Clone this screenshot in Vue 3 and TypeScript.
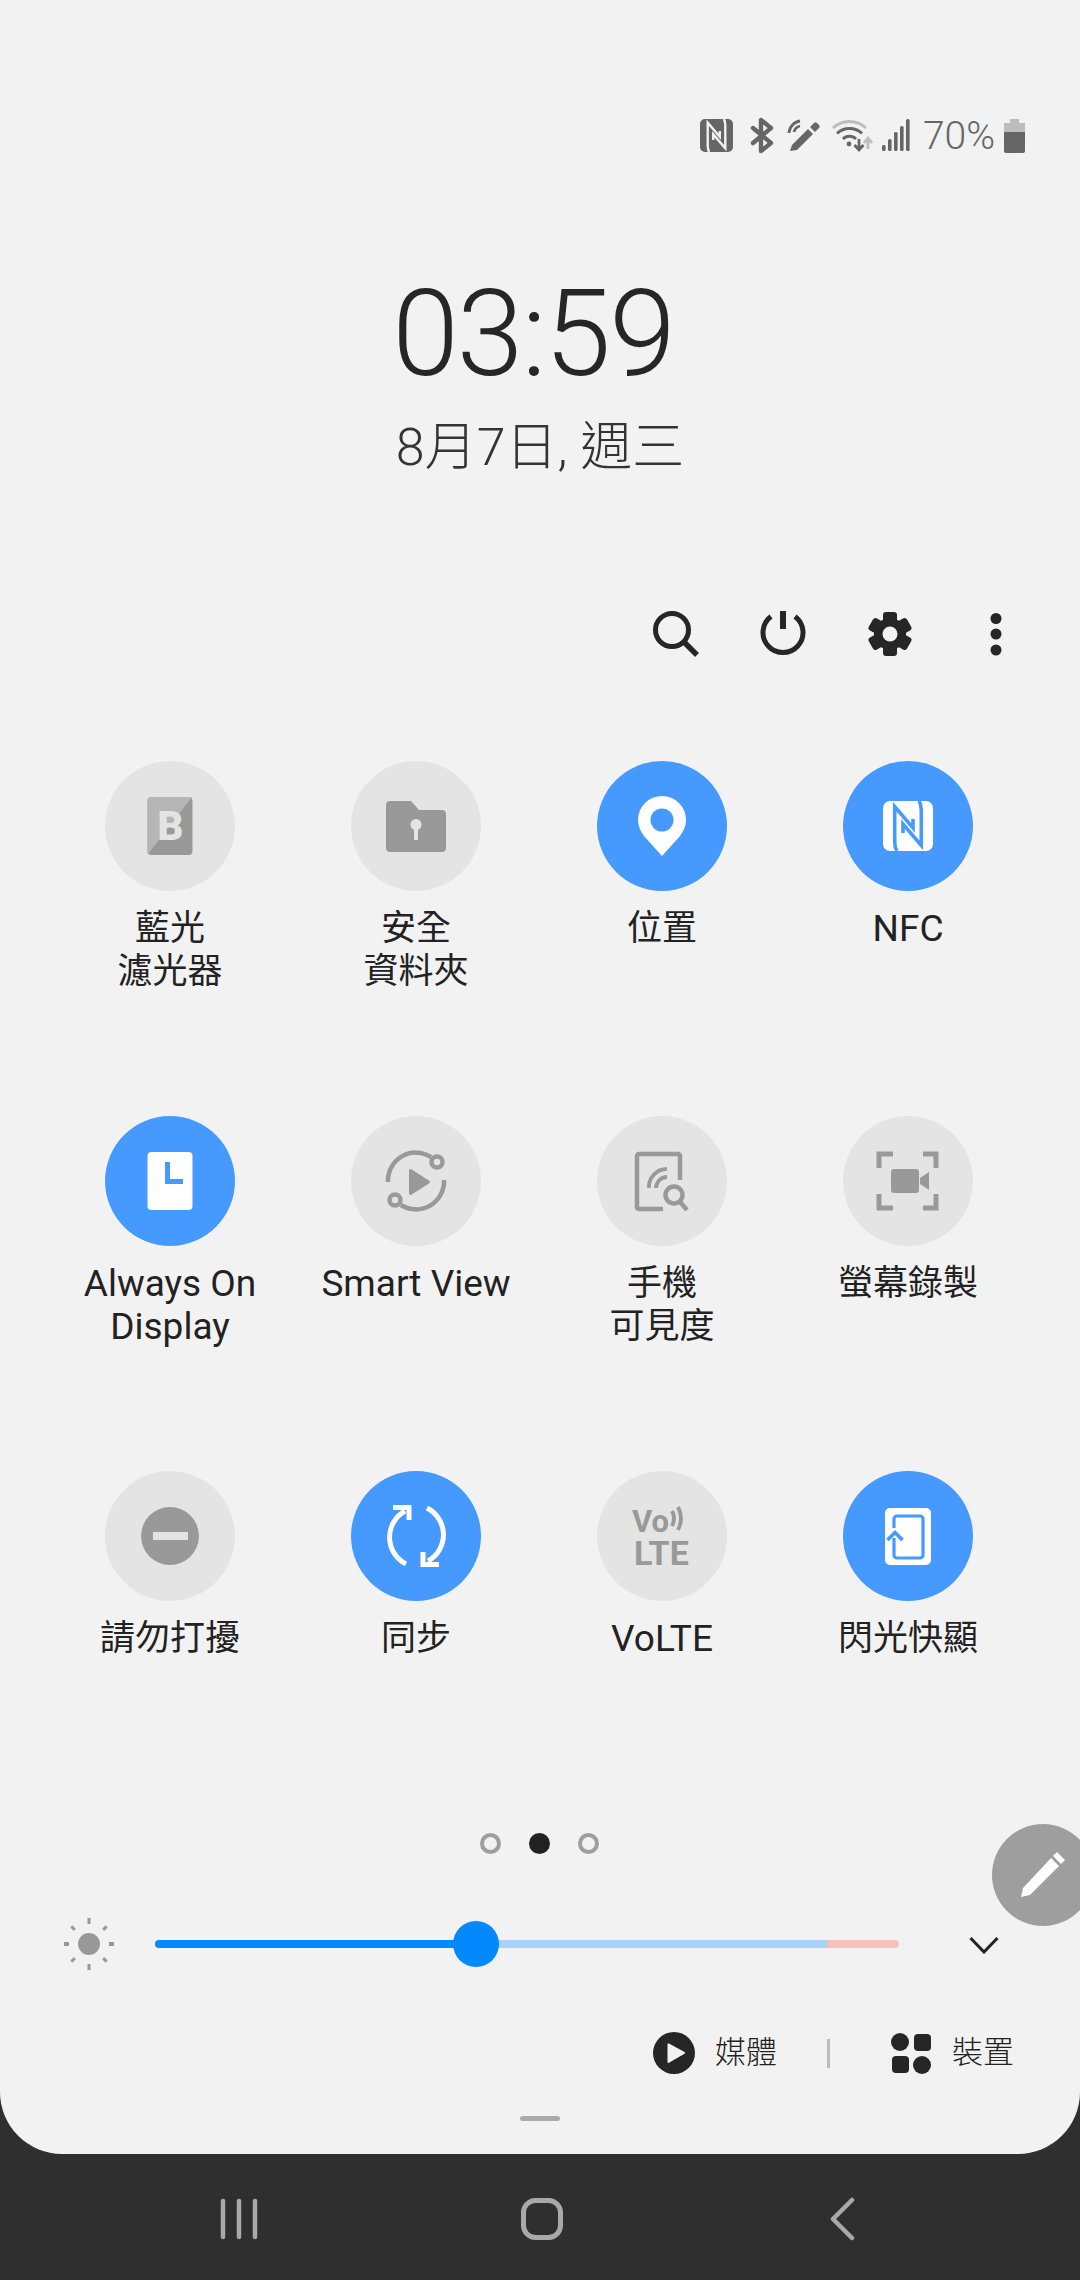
<script setup lang="ts">
const nfcGaps = 'M14 50C12 47 11.7 45 11.7 41V5.7L30 27V18M36 0C38 3 38.3 5 38.3 9V44.3L20 23V32'
</script>

<template>
  <div class="screen">
    <div class="panel">
      <div class="status">
        <svg class="status-icons" width="210" height="38" viewBox="0 0 210 38">
          <rect x="0" y="2" width="33" height="33" rx="5" fill="#666" />
          <g transform="translate(0 2) scale(.66)"><path :d="nfcGaps" fill="none" stroke="#f2f2f2" stroke-width="3.600" /></g>
          <path d="M61 3V34L71 26 53 11M61 3L71 11 53 26" fill="none" stroke="#666" stroke-width="4.400" stroke-linejoin="round" stroke-linecap="round" />
          <path d="M90 34l2-6 16-16 5 5-16 16z" fill="#666" />
          <path d="M110 10l4-4a2 2 0 0 1 3 0l2 2a2 2 0 0 1 0 3l-4 4z" fill="#666" />
          <path d="M89 16a13 13 0 0 1 11-12M94 15a8 8 0 0 1 6-6" fill="none" stroke="#666" stroke-width="2.800" />
          <path d="M133 11a24 24 0 0 1 33 0" fill="none" stroke="#bdbdbd" stroke-width="3" />
          <path d="M137 16.500a18 18 0 0 1 25 0M143 22a9 9 0 0 1 13 0" fill="none" stroke="#666" stroke-width="3" />
          <circle cx="149" cy="27" r="2.400" fill="#666" />
          <path d="M159 22v10M154.500 28l4.500 5 4.500-5" fill="none" stroke="#666" stroke-width="2.800" />
          <path d="M168 32V22M164 26l4-5 4 5" fill="none" stroke="#bdbdbd" stroke-width="2.800" />
          <g fill="#666">
            <rect x="182" y="28" width="3.600" height="6" rx="1.500" />
            <rect x="188" y="22" width="3.600" height="12" rx="1.500" />
            <rect x="194" y="15" width="3.600" height="19" rx="1.500" />
            <rect x="200" y="9" width="3.600" height="25" rx="1.500" />
            <rect x="206" y="2" width="3.600" height="32" rx="1.500" />
          </g>
        </svg>
        <span class="pct">70%</span>
        <svg class="battery" width="21" height="34" viewBox="0 0 21 34">
          <rect x="6" y="0" width="9" height="4" fill="#bdbdbd" />
          <rect x="0" y="4" width="21" height="30" rx="2" fill="#666" />
          <path d="M0 13V6a2 2 0 0 1 2-2h17a2 2 0 0 1 2 2v7z" fill="#bdbdbd" />
        </svg>
      </div>

      <div class="clock">
        <div class="time">03:59</div>
        <div class="date">8月7日, 週三</div>
      </div>

      <div class="actions">
        <svg width="60" height="60" viewBox="0 0 60 60">
          <circle cx="25" cy="26" r="16.500" fill="none" stroke="#262626" stroke-width="5" />
          <path d="M37 38l13 13" stroke="#262626" stroke-width="5.500" />
        </svg>
        <svg width="60" height="60" viewBox="0 0 60 60">
          <path d="M18 12.500a20 20 0 1 0 24 0" fill="none" stroke="#262626" stroke-width="5" />
          <path d="M30 7v18" stroke="#262626" stroke-width="6" />
        </svg>
        <svg width="60" height="60" viewBox="0 0 60 60">
          <g fill="#262626" transform="translate(30 30)">
            <circle r="16" />
            <rect x="-7" y="-22" width="14" height="12" rx="3" />
            <rect x="-7" y="-22" width="14" height="12" rx="3" transform="rotate(60)" />
            <rect x="-7" y="-22" width="14" height="12" rx="3" transform="rotate(120)" />
            <rect x="-7" y="-22" width="14" height="12" rx="3" transform="rotate(180)" />
            <rect x="-7" y="-22" width="14" height="12" rx="3" transform="rotate(240)" />
            <rect x="-7" y="-22" width="14" height="12" rx="3" transform="rotate(300)" />
            <circle r="7.500" fill="#f2f2f2" />
          </g>
        </svg>
        <svg width="60" height="60" viewBox="0 0 60 60">
          <g fill="#262626"><circle cx="30" cy="14.500" r="5.500" /><circle cx="30" cy="30" r="5.500" /><circle cx="30" cy="46" r="5.500" /></g>
        </svg>
      </div>

      <div class="grid">
        <div class="tile">
          <div class="disc">
            <svg viewBox="0 0 80 80" width="80" height="80">
              <rect x="17.500" y="11" width="45" height="58" rx="4" fill="#999" />
              <path d="M21.500 11H62L18 68q-.500-1-.500-3V15a4 4 0 0 1 4-4z" fill="#b6b6b6" />
              <text x="40.500" y="53.500" text-anchor="middle" class="glyph-b">B</text>
            </svg>
          </div>
          <div class="label">藍光<br />濾光器</div>
        </div>
        <div class="tile">
          <div class="disc">
            <svg viewBox="0 0 80 80" width="80" height="80">
              <path d="M14 15h21l8 9h23a4 4 0 0 1 4 4v34a4 4 0 0 1-4 4H14a4 4 0 0 1-4-4V19a4 4 0 0 1 4-4z" fill="#999" />
              <circle cx="40" cy="38.500" r="5.500" fill="#e4e4e4" />
              <rect x="38" y="40" width="4" height="14" fill="#e4e4e4" />
            </svg>
          </div>
          <div class="label">安全<br />資料夾</div>
        </div>
        <div class="tile">
          <div class="disc on">
            <svg viewBox="0 0 80 80" width="80" height="80">
              <path fill="#fff" fill-rule="evenodd" d="M40 10a24 24 0 0 0-24 24c0 6 2.500 11 6 16L40 70l18-20c3.500-5 6-10 6-16a24 24 0 0 0-24-24zm0 12.500a11.500 11.500 0 1 1 0 23 11.500 11.500 0 0 1 0-23z" />
            </svg>
          </div>
          <div class="label">位置</div>
        </div>
        <div class="tile">
          <div class="disc on">
            <svg viewBox="0 0 80 80" width="80" height="80">
              <rect x="15" y="15" width="50" height="50" rx="7" fill="#fff" />
              <g transform="translate(15 15)"><path :d="nfcGaps" fill="none" stroke="#4599ff" stroke-width="3.600" /></g>
            </svg>
          </div>
          <div class="label latin">NFC</div>
        </div>

        <div class="tile">
          <div class="disc on">
            <svg viewBox="0 0 80 80" width="80" height="80">
              <rect x="17.500" y="11" width="45" height="58" rx="4" fill="#fff" />
              <path d="M37.500 21V40.500H53" fill="none" stroke="#4599ff" stroke-width="5" />
            </svg>
          </div>
          <div class="label latin">Always On<br />Display</div>
        </div>
        <div class="tile">
          <div class="disc">
            <svg viewBox="0 0 80 80" width="80" height="80">
              <g fill="none" stroke="#999" stroke-width="4.500">
                <path d="M12 41A28 28 0 0 1 55 16" />
                <path d="M68 39A28 28 0 0 1 25 64" />
                <circle cx="61" cy="21" r="5.500" />
                <circle cx="19" cy="59" r="5.500" />
              </g>
              <path d="M34.500 29.500L52.500 41 34.500 52.500z" fill="#999" stroke="#999" stroke-width="3" stroke-linejoin="round" />
            </svg>
          </div>
          <div class="label latin">Smart View</div>
        </div>
        <div class="tile">
          <div class="disc">
            <svg viewBox="0 0 80 80" width="80" height="80">
              <g fill="none" stroke="#999" stroke-width="4.500">
                <path d="M58 39V15a2 2 0 0 0-2-2H17a2 2 0 0 0-2 2v51a2 2 0 0 0 2 2h24" />
                <path d="M27 47a18 18 0 0 1 18-19" stroke-width="3.800" />
                <path d="M34 47a11 11 0 0 1 11-11" stroke-width="3.800" />
                <circle cx="52" cy="54" r="8.500" />
                <path d="M58 61l7 8" />
              </g>
            </svg>
          </div>
          <div class="label">手機<br />可見度</div>
        </div>
        <div class="tile">
          <div class="disc">
            <svg viewBox="0 0 80 80" width="80" height="80">
              <path d="M11 27V13H25M55 13H68V27M68 53V67H55M25 67H11V53" fill="none" stroke="#999" stroke-width="5" />
              <rect x="23" y="28" width="28" height="24" rx="3" fill="#999" />
              <path d="M52 37l9-6v18l-9-6z" fill="#999" />
            </svg>
          </div>
          <div class="label">螢幕錄製</div>
        </div>

        <div class="tile">
          <div class="disc">
            <svg viewBox="0 0 80 80" width="80" height="80">
              <circle cx="40" cy="40" r="29" fill="#999" />
              <rect x="23" y="36" width="35" height="8" fill="#e4e4e4" />
            </svg>
          </div>
          <div class="label">請勿打擾</div>
        </div>
        <div class="tile">
          <div class="disc on">
            <svg viewBox="0 0 80 80" width="80" height="80">
              <g fill="none" stroke="#fff" stroke-width="5">
                <path d="M29 15A30 30 0 0 0 30 68" />
                <path d="M51 12A30 30 0 0 1 52 65" />
                <path d="M17 11.500H33V24" />
                <path d="M63 68.500H47V56" />
              </g>
            </svg>
          </div>
          <div class="label">同步</div>
        </div>
        <div class="tile">
          <div class="disc">
            <svg viewBox="0 0 80 80" width="80" height="80">
              <text x="10" y="36" class="glyph-vo">Vo</text>
              <path d="M50 15q4 7 0 15M56 11q6 11 0 23" fill="none" stroke="#999" stroke-width="3.800" />
              <text x="12" y="69" class="glyph-lte">LTE</text>
            </svg>
          </div>
          <div class="label latin">VoLTE</div>
        </div>
        <div class="tile">
          <div class="disc on">
            <svg viewBox="0 0 80 80" width="80" height="80">
              <rect x="17" y="12" width="46" height="57" rx="5" fill="#fff" />
              <path d="M26 42V59a3 3 0 0 0 3 3H52a3 3 0 0 0 3-3V23a3 3 0 0 0-3-3H29a3 3 0 0 0-3 3V32" fill="none" stroke="#4599ff" stroke-width="3.200" />
              <path d="M19.500 44L27 36.500 34.500 44" fill="none" stroke="#4599ff" stroke-width="3.600" />
            </svg>
          </div>
          <div class="label">閃光快顯</div>
        </div>
      </div>

      <div class="pager">
        <span class="dot"></span>
        <span class="dot current"></span>
        <span class="dot"></span>
      </div>

      <div class="brightness">
        <svg class="sun" width="56" height="56" viewBox="0 0 56 56">
          <circle cx="28" cy="28" r="11" fill="#999" />
          <g fill="#999" transform="translate(28 28)">
            <rect x="-1.500" y="-26" width="3" height="6" />
            <rect x="-1.500" y="20" width="3" height="6" />
            <rect x="-25" y="-2" width="5" height="4" />
            <rect x="20" y="-2" width="5" height="4" />
            <rect x="-1.500" y="-22" width="3" height="5" transform="rotate(45) translate(0 -3)" />
            <rect x="-1.500" y="-22" width="3" height="5" transform="rotate(135) translate(0 -3)" />
            <rect x="-1.500" y="-22" width="3" height="5" transform="rotate(225) translate(0 -3)" />
            <rect x="-1.500" y="-22" width="3" height="5" transform="rotate(315) translate(0 -3)" />
          </g>
        </svg>
        <div class="track">
          <div class="fill"></div>
          <div class="thumb"></div>
          <div class="rest"></div>
          <div class="over"></div>
        </div>
        <svg class="chevron" width="30" height="18" viewBox="0 0 30 18">
          <path d="M1.500 2L15 16 28.500 2" fill="none" stroke="#222" stroke-width="3" />
        </svg>
      </div>

      <div class="media">
        <svg width="42" height="42" viewBox="0 0 42 42">
          <circle cx="21" cy="21" r="21" fill="#262626" />
          <path d="M15.500 12.500L31 21 15.500 30z" fill="#f2f2f2" stroke="#f2f2f2" stroke-width="2" stroke-linejoin="round" />
        </svg>
        <span class="media-text">媒體</span>
        <span class="sep"></span>
        <svg class="devices" width="42" height="42" viewBox="0 0 42 42">
          <circle cx="10" cy="10" r="9" fill="#262626" />
          <rect x="24" y="2" width="17" height="17" rx="4" fill="#262626" />
          <rect x="2" y="24" width="17" height="17" rx="4" fill="#262626" />
          <circle cx="32" cy="33" r="9" fill="#262626" />
        </svg>
        <span class="media-text">裝置</span>
      </div>

      <div class="handle"></div>

      <div class="fab">
        <svg width="60" height="60" viewBox="0 0 60 60">
          <path d="M8 52l2-9L38 13l8 8-29 29z" fill="#fff" />
          <path d="M40 11l4-4 8 8-4 4z" fill="#fff" />
        </svg>
      </div>
    </div>

    <div class="nav">
      <svg class="recents" width="40" height="42" viewBox="0 0 40 42">
        <path d="M4 3V39M20 3V39M36 3V39" stroke="#a9a9a9" stroke-width="4.500" stroke-linecap="round" />
      </svg>
      <svg class="home" width="44" height="44" viewBox="0 0 44 44">
        <rect x="3.500" y="3.500" width="37" height="37" rx="12" fill="none" stroke="#a9a9a9" stroke-width="5" />
      </svg>
      <svg class="back" width="26" height="44" viewBox="0 0 26 44">
        <path d="M23 3L4 22l19 19" fill="none" stroke="#a9a9a9" stroke-width="4.500" stroke-linecap="round" stroke-linejoin="round" />
      </svg>
    </div>
  </div>
</template>

<style>
html, body { margin: 0; background: #2f2f2f; }
</style>

<style scoped>
.screen {
  width: 1080px;
  height: 2280px;
  display: flex;
  flex-direction: column;
  background: #2f2f2f;
  font-family: Roboto, "Noto Sans CJK TC", sans-serif;
  overflow: hidden;
}
.panel {
  position: relative;
  height: 2154px;
  flex: none;
  display: flex;
  flex-direction: column;
  background: #f2f2f2;
  border-radius: 0 0 62px 62px;
  overflow: hidden;
}
.status {
  display: flex;
  align-items: center;
  justify-content: flex-end;
  margin-top: 117px;
  height: 38px;
  padding-right: 55px;
}
.pct {
  margin-left: 13px;
  margin-right: 9px;
  font-size: 39px;
  font-weight: 300;
  color: #666;
  line-height: 38px;
}
.clock {
  display: flex;
  flex-direction: column;
  align-items: center;
  margin-top: 104px;
  height: 336px;
}
.time {
  font-size: 120px;
  font-weight: 300;
  line-height: 150px;
  letter-spacing: -2px;
  padding-right: 14px;
  color: #262626;
}
.date {
  margin-top: 7px;
  font-size: 52px;
  font-weight: 300;
  line-height: 64px;
  color: #333;
}
.actions {
  display: flex;
  justify-content: flex-end;
  gap: 46.500px;
  padding-right: 54px;
  height: 60px;
  margin-top: 9px;
}
.grid {
  display: grid;
  grid-template-columns: repeat(4, 246px);
  grid-auto-rows: 355px;
  padding-left: 47px;
  margin-top: 97px;
}
.tile {
  display: flex;
  flex-direction: column;
  align-items: center;
}
.disc {
  width: 130px;
  height: 130px;
  border-radius: 50%;
  background: #e4e4e4;
  display: flex;
  align-items: center;
  justify-content: center;
}
.disc.on { background: #4599ff; }
.label {
  margin-top: 16px;
  font-size: 35px;
  line-height: 43px;
  color: #222;
  text-align: center;
}
.label.latin { font-size: 37px; }
.glyph-b {
  font-family: Roboto, sans-serif;
  font-size: 40px;
  font-weight: 900;
  fill: #e4e4e4;
}
.glyph-vo {
  font-family: Roboto, sans-serif;
  font-size: 31px;
  font-weight: 700;
  fill: #999;
}
.glyph-lte {
  font-family: Roboto, sans-serif;
  font-size: 34px;
  font-weight: 700;
  fill: #999;
}
.pager {
  display: flex;
  justify-content: center;
  gap: 28px;
  margin-top: 7px;
  padding-right: 2px;
  height: 21px;
}
.dot {
  width: 21px;
  height: 21px;
  box-sizing: border-box;
  border: 4px solid #9e9e9e;
  border-radius: 50%;
}
.dot.current {
  background: #222;
  border-color: #222;
}
.brightness {
  display: flex;
  align-items: center;
  height: 56px;
  margin-top: 62px;
  padding-left: 61px;
}
.track {
  position: relative;
  display: flex;
  align-items: center;
  width: 744px;
  margin-left: 38px;
  height: 46px;
}
.fill {
  width: 299px;
  height: 8px;
  background: #0388fd;
  border-radius: 4px 0 0 4px;
}
.thumb {
  width: 46px;
  height: 46px;
  margin-left: -1px;
  border-radius: 50%;
  background: #0388fd;
  flex: none;
  position: relative;
  z-index: 1;
}
.rest {
  flex: 1;
  height: 8px;
  margin-left: -1px;
  background: #a8d2f7;
}
.over {
  width: 72px;
  height: 8px;
  background: #f6c1bd;
  border-radius: 0 4px 4px 0;
}
.chevron {
  margin-left: 70px;
  margin-top: 2px;
}
.media {
  display: flex;
  align-items: center;
  justify-content: flex-end;
  height: 44px;
  margin-top: 59px;
  padding-right: 66px;
}
.media-text {
  margin-left: 20px;
  font-size: 31px;
  font-weight: 300;
  color: #222;
  line-height: 44px;
}
.sep {
  width: 3px;
  height: 29px;
  background: #bbb;
  margin-left: 50px;
  margin-right: 60px;
}
.handle {
  align-self: center;
  width: 40px;
  height: 5px;
  border-radius: 3px;
  background: #aaa;
  margin-top: 41px;
}
.fab {
  position: absolute;
  left: 992px;
  top: 1824px;
  width: 102px;
  height: 102px;
  border-radius: 50%;
  background: #9e9e9e;
  display: flex;
  align-items: center;
  justify-content: center;
}
.nav {
  flex: 1;
  display: flex;
  align-items: center;
  padding-top: 4px;
}
.recents { margin-left: 219px; }
.home { margin-left: 261px; }
.back { margin-left: 265px; }
</style>
